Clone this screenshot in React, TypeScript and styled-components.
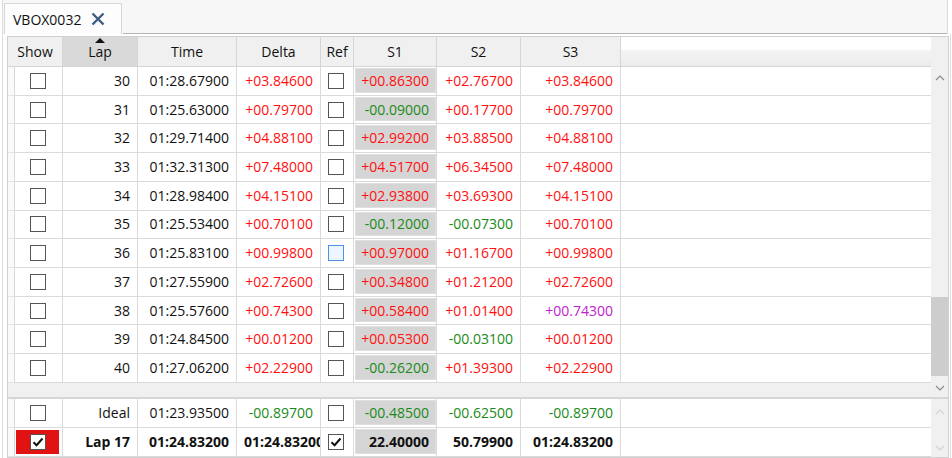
import styled, { createGlobalStyle } from "styled-components";

const GlobalStyle = createGlobalStyle`
  html, body {
    margin: 0;
    padding: 0;
    background: #ffffff;
  }
  body {
    font-family: "Segoe UI", "Open Sans", "Noto Sans", sans-serif;
    font-size: 14px;
    color: #111;
    overflow: hidden;
  }
`;

const Window = styled.div`
  width: 952px;
  height: 458px;
  box-sizing: border-box;
  display: flex;
  flex-direction: column;
`;

const TabStrip = styled.div`
  height: 34px;
  box-sizing: border-box;
  margin: 0 4px 0 2px;
  border-left: 1px solid #dcdcdc;
  border-right: 1px solid #dcdcdc;
  background: #f7f7f7;
  display: flex;
  align-items: flex-end;
  padding-left: 1px;
  position: relative;
  &::after {
    content: "";
    position: absolute;
    left: 120px;
    right: 0;
    bottom: 0;
    height: 1px;
    background: #b4b4b4;
  }
`;

const Tab = styled.div`
  height: 31px;
  width: 118px;
  box-sizing: border-box;
  border: 1px solid #d6d6d6;
  border-bottom: none;
  background: #fdfdfd;
  display: flex;
  align-items: center;
  padding-left: 8px;
  gap: 10px;
  font-size: 14px;
  color: #111;
`;

const Body = styled.div`
  flex: 1;
  margin: 0 1px 0 2px;
  border-left: 1px solid #dcdcdc;
  border-right: 1px solid #dcdcdc;
  padding: 2px 1px 0 4px;
  display: flex;
  min-height: 0;
`;

const Panel = styled.div`
  flex: 1;
  border: 1px solid #d0d0d0;
  display: flex;
  flex-direction: column;
  min-width: 0;
`;

const Section = styled.div`
  display: flex;
`;

const Grid = styled.div`
  flex: 1;
  display: flex;
  flex-direction: column;
  min-width: 0;
`;

const HeaderRow = styled.div`
  display: grid;
  grid-template-columns: 55px 75px 99px 84px 33px 83px 84px 100px 1fr;
  height: 30px;
`;

const HeaderCell = styled.div<{ $sorted?: boolean; $filler?: boolean }>`
  position: relative;
  box-sizing: border-box;
  border-right: ${(p) => (p.$filler ? "none" : "1px solid #d5d5d5")};
  border-bottom: 1px solid #d5d5d5;
  background: ${(p) =>
    p.$sorted
      ? "#d9d9d9"
      : p.$filler
      ? "linear-gradient(#ffffff 0%, #ffffff 42%, #f4f4f4 46%, #ececec 100%)"
      : "#f0f0f0"};
  display: flex;
  align-items: center;
  justify-content: center;
  color: #111;
  padding-bottom: 1px;
`;

const SortArrow = styled.span`
  position: absolute;
  top: 1px;
  left: 50%;
  margin-left: -5px;
  width: 0;
  height: 0;
  border-left: 5px solid transparent;
  border-right: 5px solid transparent;
  border-bottom: 5px solid #111;
`;

const Row = styled.div<{ $h: number; $bold?: boolean }>`
  display: grid;
  grid-template-columns: 7px 48px 75px 99px 84px 33px 83px 84px 100px 1fr;
  height: ${(p) => p.$h}px;
  font-weight: ${(p) => (p.$bold ? 700 : 400)};
`;

const Cell = styled.div<{ $color?: string; $last?: boolean }>`
  box-sizing: border-box;
  border-right: ${(p) => (p.$last ? "none" : "1px solid #dadada")};
  border-bottom: 1px solid #dadada;
  display: flex;
  align-items: center;
  justify-content: safe flex-end;
  padding: 0 7px 1px 7px;
  color: ${(p) => p.$color || "#111"};
  white-space: nowrap;
  overflow: hidden;
  min-width: 0;
`;

const CheckCell = styled(Cell)<{ $flag?: boolean }>`
  justify-content: center;
  padding: 2px 3px 2px 1px;
  & > div {
    flex: 1;
    align-self: stretch;
    display: flex;
    align-items: center;
    justify-content: center;
    background: ${(p) => (p.$flag ? "#e01212" : "transparent")};
  }
`;

const StubCell = styled.div`
  box-sizing: border-box;
  border-right: 1px solid #d8d8d8;
  border-bottom: 1px solid #e4e4e4;
  background: #fafafa;
`;

const ShadedCell = styled(Cell)`
  padding: 1px 0 2px 1px;
  & > span {
    flex: 1;
    align-self: stretch;
    box-sizing: border-box;
    background: #d5d5d5;
    border: 1px solid #dfdfdf;
    display: flex;
    align-items: center;
    justify-content: flex-end;
    padding: 0 6px 0 0;
  }
`;

const Box = styled.span<{ $hover?: boolean }>`
  width: 16px;
  height: 16px;
  box-sizing: border-box;
  border: 1px solid ${(p) => (p.$hover ? "#4a94e8" : "#555")};
  background: ${(p) => (p.$hover ? "#eef5fe" : "#fff")};
  display: flex;
  align-items: center;
  justify-content: center;
`;

const HBand = styled.div`
  height: 14px;
  background: #f0f0f0;
`;

const Divider = styled.div`
  height: 2px;
  background: #d6d6d6;
`;

const VScroll = styled.div`
  width: 17px;
  background: #f0f0f0;
  position: relative;
  display: flex;
  flex-direction: column;
  align-items: center;
`;

const Spacer = styled.div<{ $h?: number }>`
  height: ${(p) => (p.$h ? `${p.$h}px` : "auto")};
  flex: ${(p) => (p.$h ? "none" : 1)};
`;

const Arrow = styled.span<{ $faint?: boolean }>`
  display: flex;
  height: 17px;
  align-items: center;
  justify-content: center;
  color: ${(p) => (p.$faint ? "#d2d2d2" : "#8a8a8a")};
`;

const Thumb = styled.div`
  position: absolute;
  left: 0;
  right: 0;
  top: 260px;
  height: 79px;
  background: #cdcdcd;
`;

const RED = "#ff1010";
const GREEN = "#1a8a1a";
const PURPLE = "#c020d0";

function Chevron({ down, faint }: { down?: boolean; faint?: boolean }) {
  return (
    <Arrow $faint={faint}>
      <svg width="10" height="6" viewBox="0 0 10 6">
        <path
          d={down ? "M1 1 L5 5 L9 1" : "M1 5 L5 1 L9 5"}
          fill="none"
          stroke="currentColor"
          strokeWidth="1.2"
        />
      </svg>
    </Arrow>
  );
}

function CheckBox({ checked, hover }: { checked?: boolean; hover?: boolean }) {
  return (
    <Box $hover={hover}>
      {checked && (
        <svg width="12" height="12" viewBox="0 0 12 12">
          <path d="M1.5 6.2 L4.6 9.2 L10.5 2.5" fill="none" stroke="#111" strokeWidth="2" />
        </svg>
      )}
    </Box>
  );
}

type Lap = {
  lap: string;
  time: string;
  delta: string;
  s: [string, string, string];
  purple?: number;
  hover?: boolean;
};

const laps: Lap[] = [
  { lap: "30", time: "01:28.67900", delta: "+03.84600", s: ["+00.86300", "+02.76700", "+03.84600"] },
  { lap: "31", time: "01:25.63000", delta: "+00.79700", s: ["-00.09000", "+00.17700", "+00.79700"] },
  { lap: "32", time: "01:29.71400", delta: "+04.88100", s: ["+02.99200", "+03.88500", "+04.88100"] },
  { lap: "33", time: "01:32.31300", delta: "+07.48000", s: ["+04.51700", "+06.34500", "+07.48000"] },
  { lap: "34", time: "01:28.98400", delta: "+04.15100", s: ["+02.93800", "+03.69300", "+04.15100"] },
  { lap: "35", time: "01:25.53400", delta: "+00.70100", s: ["-00.12000", "-00.07300", "+00.70100"] },
  { lap: "36", time: "01:25.83100", delta: "+00.99800", s: ["+00.97000", "+01.16700", "+00.99800"], hover: true },
  { lap: "37", time: "01:27.55900", delta: "+02.72600", s: ["+00.34800", "+01.21200", "+02.72600"] },
  { lap: "38", time: "01:25.57600", delta: "+00.74300", s: ["+00.58400", "+01.01400", "+00.74300"], purple: 2 },
  { lap: "39", time: "01:24.84500", delta: "+00.01200", s: ["+00.05300", "-00.03100", "+00.01200"] },
  { lap: "40", time: "01:27.06200", delta: "+02.22900", s: ["-00.26200", "+01.39300", "+02.22900"] },
];

const tone = (v: string) => (v.startsWith("-") ? GREEN : RED);

function LapRow({ l }: { l: Lap }) {
  return (
    <Row $h={28.73}>
      <StubCell />
      <CheckCell>
        <div>
          <CheckBox />
        </div>
      </CheckCell>
      <Cell>{l.lap}</Cell>
      <Cell>{l.time}</Cell>
      <Cell $color={tone(l.delta)}>{l.delta}</Cell>
      <CheckCell>
        <div>
          <CheckBox hover={l.hover} />
        </div>
      </CheckCell>
      <ShadedCell $color={tone(l.s[0])}>
        <span>{l.s[0]}</span>
      </ShadedCell>
      <Cell $color={tone(l.s[1])}>{l.s[1]}</Cell>
      <Cell $color={l.purple === 2 ? PURPLE : tone(l.s[2])}>{l.s[2]}</Cell>
      <Cell $last />
    </Row>
  );
}

export default function App() {
  return (
    <Window>
      <GlobalStyle />
      <TabStrip>
        <Tab>
          <span>VBOX0032</span>
          <svg width="14" height="14" viewBox="0 0 14 14">
            <path d="M1.5 1.5 L12.5 12.5 M12.5 1.5 L1.5 12.5" stroke="#3f5d80" strokeWidth="2.4" />
          </svg>
        </Tab>
      </TabStrip>
      <Body>
        <Panel>
          <Section>
            <Grid>
              <HeaderRow>
                <HeaderCell>Show</HeaderCell>
                <HeaderCell $sorted>
                  <SortArrow />
                  Lap
                </HeaderCell>
                <HeaderCell>Time</HeaderCell>
                <HeaderCell>Delta</HeaderCell>
                <HeaderCell>Ref</HeaderCell>
                <HeaderCell>S1</HeaderCell>
                <HeaderCell>S2</HeaderCell>
                <HeaderCell>S3</HeaderCell>
                <HeaderCell $filler />
              </HeaderRow>
              {laps.map((l) => (
                <LapRow key={l.lap} l={l} />
              ))}
              <HBand />
            </Grid>
            <VScroll>
              <Spacer $h={32} />
              <Chevron />
              <Thumb />
              <Spacer />
              <Chevron down />
            </VScroll>
          </Section>
          <Divider />
          <Section>
            <Grid>
              <Row $h={29}>
                <StubCell />
                <CheckCell>
                  <div>
                    <CheckBox />
                  </div>
                </CheckCell>
                <Cell>Ideal</Cell>
                <Cell>01:23.93500</Cell>
                <Cell $color={GREEN}>-00.89700</Cell>
                <CheckCell>
                  <div>
                    <CheckBox />
                  </div>
                </CheckCell>
                <ShadedCell $color={GREEN}>
                  <span>-00.48500</span>
                </ShadedCell>
                <Cell $color={GREEN}>-00.62500</Cell>
                <Cell $color={GREEN}>-00.89700</Cell>
                <Cell $last />
              </Row>
              <Row $h={29} $bold>
                <StubCell />
                <CheckCell $flag>
                  <div>
                    <CheckBox checked />
                  </div>
                </CheckCell>
                <Cell>Lap 17</Cell>
                <Cell>01:24.83200</Cell>
                <Cell>01:24.83200</Cell>
                <CheckCell>
                  <div>
                    <CheckBox checked />
                  </div>
                </CheckCell>
                <ShadedCell>
                  <span>22.40000</span>
                </ShadedCell>
                <Cell>50.79900</Cell>
                <Cell>01:24.83200</Cell>
                <Cell $last />
              </Row>
            </Grid>
            <VScroll>
              <Spacer $h={5} />
              <Chevron faint />
              <Spacer />
              <Chevron down faint />
            </VScroll>
          </Section>
        </Panel>
      </Body>
    </Window>
  );
}
